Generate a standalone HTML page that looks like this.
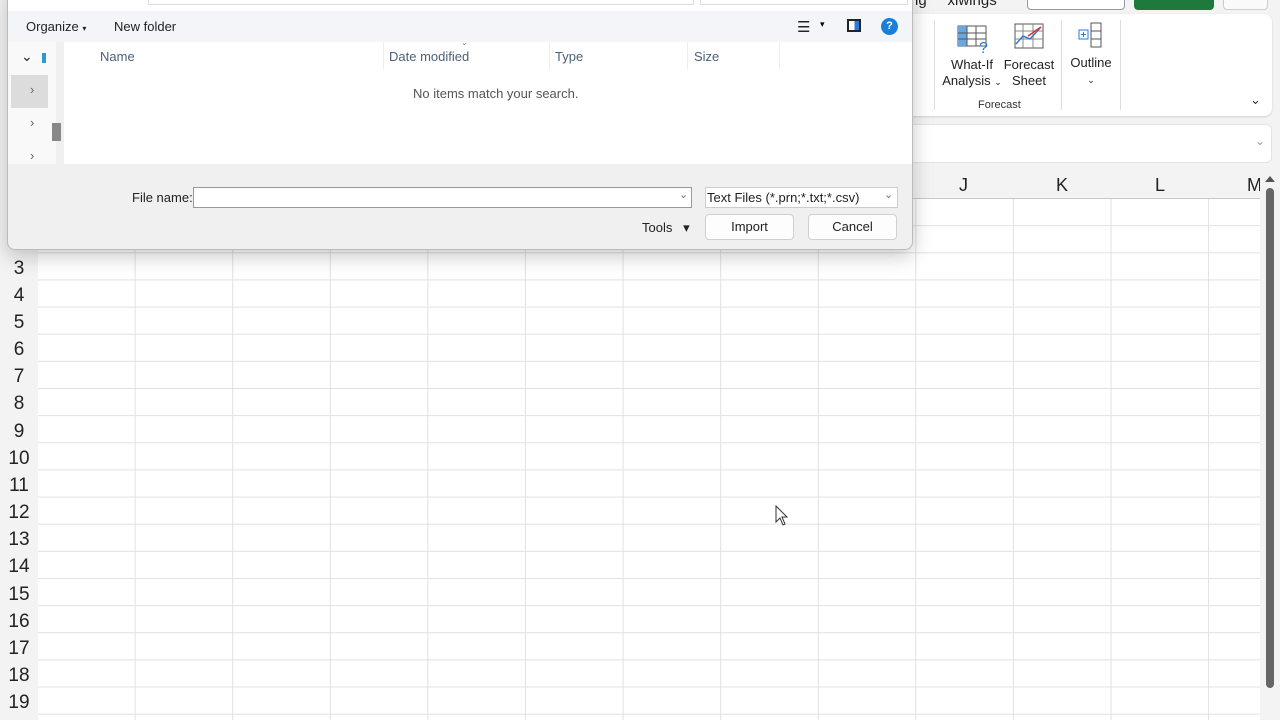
<!DOCTYPE html><html><head><style>
*{margin:0;padding:0;box-sizing:border-box}
body{width:1280px;height:720px;overflow:hidden;background:#f3f3f3;font-family:"Liberation Sans",sans-serif;position:relative}
.a{position:absolute}
.grid{left:38px;top:198px;width:1222px;height:522px;background-color:#fff;
background-image:linear-gradient(to right,#e1e1e1 1px,transparent 1px),linear-gradient(to bottom,#e1e1e1 1px,transparent 1px);
background-size:97.6px 27.15px;background-position:-1px 0px}
.rn{left:0;width:38px;text-align:center;font-size:19px;color:#222;height:27px;line-height:27px}
.ch{top:175px;font-size:18px;color:#222}
.t{font-size:13px;color:#222}
.btn{background:#fdfdfd;border:1px solid #d0d0d0;border-radius:4px;font-size:13px;text-align:center;line-height:24px;height:26px;color:#222}
</style></head><body>
<!-- ribbon -->
<div class="a" style="left:880px;top:0;width:400px;height:10px;background:#f3f3f3"></div>
<div class="a" style="left:1027px;top:-8px;width:98px;height:18px;border:1px solid #999;border-radius:4px;background:#fff"></div>
<div class="a" style="left:1134px;top:-8px;width:80px;height:18px;border-radius:4px;background:#1d7a3c"></div>
<div class="a" style="left:1223px;top:-8px;width:45px;height:18px;border:1px solid #ccc;border-radius:4px;background:#fafafa"></div>
<div class="a t" style="left:915px;top:-8px;font-size:15px">ig&nbsp;&nbsp;&nbsp;&nbsp;&nbsp;xlwings</div>
<div class="a" style="left:900px;top:14px;width:372px;height:102px;background:#fff;border-radius:8px;box-shadow:0 1px 2px rgba(0,0,0,.15)"></div>
<div class="a" style="left:934px;top:20px;width:1px;height:90px;background:#ddd"></div>
<div class="a" style="left:1061px;top:20px;width:1px;height:90px;background:#ddd"></div>
<div class="a" style="left:1120px;top:20px;width:1px;height:90px;background:#ddd"></div>
<svg class="a" style="left:957px;top:24px" width="34" height="30"><rect x="1" y="2" width="28" height="20" fill="none" stroke="#555"/><rect x="1" y="2" width="9" height="20" fill="#6aa6e0"/><path d="M1 9H29M1 15H29M10 2V22M19 2V22" stroke="#555"/><text x="22" y="29" font-size="16" fill="#2a7ad5">?</text></svg>
<svg class="a" style="left:1013px;top:22px" width="32" height="30"><rect x="2" y="2" width="28" height="24" fill="none" stroke="#555"/><path d="M2 9H30M2 17H30M10 2V26M20 2V26" stroke="#888"/><path d="M3 22L10 14L17 17L28 5" stroke="#2a7ad5" fill="none" stroke-width="1.5"/><path d="M15 14L28 5" stroke="#d33" stroke-width="1.5"/></svg>
<svg class="a" style="left:1077px;top:20px" width="28" height="30"><rect x="14" y="3" width="10" height="24" fill="none" stroke="#555"/><path d="M14 11H24M14 19H24" stroke="#555"/><rect x="2" y="10" width="9" height="9" fill="none" stroke="#2a7ad5"/><path d="M6.5 12V17M4 14.5H9" stroke="#2a7ad5"/></svg>
<div class="a t" style="left:936px;top:57px;width:72px;text-align:center;line-height:16px;white-space:nowrap">What-If<br>Analysis <span style="font-size:9px">&#8964;</span></div>
<div class="a t" style="left:1003px;top:57px;width:52px;text-align:center;line-height:16px">Forecast<br>Sheet</div>
<div class="a t" style="left:1066px;top:55px;width:50px;text-align:center;line-height:16px">Outline<br><span style="font-size:9px">&#8964;</span></div>
<div class="a" style="left:978px;top:99px;font-size:11px;color:#333">Forecast</div>
<div class="a" style="left:1250px;top:92px;font-size:13px;color:#333">&#8964;</div>
<div class="a" style="left:900px;top:124px;width:372px;height:39px;background:#fff;border-radius:6px;border:1px solid #e3e3e3"></div>
<div class="a" style="left:1255px;top:134px;font-size:12px;color:#999">&#8964;</div>
<!-- sheet -->
<div class="a grid"></div>
<div class="a" style="left:38px;top:198px;width:1222px;height:1px;background:#c8c8c8"></div>
<div class="a ch" style="left:959px">J</div><div class="a ch" style="left:1056px">K</div><div class="a ch" style="left:1155px">L</div><div class="a ch" style="left:1247px">M</div>
<div class="a" style="left:1260px;top:172px;width:20px;height:548px;background:#f3f3f3"></div>
<div class="a" style="left:1265px;top:176px;width:0;height:0;border-left:5px solid transparent;border-right:5px solid transparent;border-bottom:6px solid #555"></div>
<div class="a" style="left:1266px;top:188px;width:8px;height:500px;border-radius:4px;background:#666"></div>
<div class="a rn" style="top:255px">3</div><div class="a rn" style="top:282px">4</div><div class="a rn" style="top:309px">5</div><div class="a rn" style="top:336px">6</div><div class="a rn" style="top:363px">7</div><div class="a rn" style="top:390px">8</div><div class="a rn" style="top:418px">9</div><div class="a rn" style="top:445px">10</div><div class="a rn" style="top:472px">11</div><div class="a rn" style="top:499px">12</div><div class="a rn" style="top:526px">13</div><div class="a rn" style="top:553px">14</div><div class="a rn" style="top:581px">15</div><div class="a rn" style="top:608px">16</div><div class="a rn" style="top:635px">17</div><div class="a rn" style="top:662px">18</div><div class="a rn" style="top:689px">19</div>
<svg class="a" style="left:775px;top:505px" width="16" height="22"><path d="M1 1V17L5 13L8 20L10 19L7 12H12Z" fill="#fff" stroke="#333"/></svg>
<!-- dialog -->
<div class="a" style="left:7px;top:-10px;width:906px;height:260px;background:#f0f0f0;border:1px solid #bbb;border-radius:0 0 8px 8px;box-shadow:0 6px 20px rgba(0,0,0,.22);overflow:hidden">
 <div class="a" style="left:0;top:0;width:906px;height:20px;background:#fff"></div>
 <div class="a" style="left:140px;top:0;width:546px;height:14px;border:1px solid #ddd;background:#fff"></div>
 <div class="a" style="left:692px;top:0;width:208px;height:14px;border:1px solid #ddd;background:#fff"></div>
 <div class="a" style="left:0;top:20px;width:906px;height:31px;background:#f3f5f8"></div>
 <div class="a t" style="left:18px;top:28px">Organize <span style="font-size:8px">▾</span></div>
 <div class="a t" style="left:106px;top:28px">New folder</div>
 <div class="a" style="left:789px;top:27px;font-size:15px;color:#222">&#9776;</div>
 <div class="a" style="left:812px;top:28px;font-size:9px">▾</div>
 <div class="a" style="left:839px;top:28px;width:14px;height:13px;border:2px solid #222;background:linear-gradient(to right,#fff 55%,#2a7ad5 55%)"></div>
 <div class="a" style="left:873px;top:27px;width:17px;height:17px;border-radius:50%;background:#1a7fd8;color:#fff;font-size:11px;text-align:center;line-height:17px;font-weight:bold">?</div>
 <div class="a" style="left:0;top:51px;width:48px;height:122px;background:#f9f9f9"></div>
 <div class="a" style="left:3px;top:84px;width:37px;height:33px;background:#dcdcdc"></div>
 <div class="a t" style="left:13px;top:57px;font-size:14px">&#8964;</div>
 <div class="a" style="left:34px;top:62px;width:4px;height:10px;background:#2a9ad5"></div>
 <div class="a" style="left:22px;top:91px;color:#666;font-size:13px">›</div>
 <div class="a" style="left:22px;top:124px;color:#666;font-size:13px">›</div>
 <div class="a" style="left:22px;top:157px;color:#666;font-size:13px">›</div>
 <div class="a" style="left:44px;top:132px;width:9px;height:18px;background:#888"></div>
 <div class="a" style="left:56px;top:51px;width:850px;height:122px;background:#fff"></div>
 <div class="a" style="left:375px;top:51px;width:1px;height:27px;background:#eee"></div>
 <div class="a" style="left:541px;top:51px;width:1px;height:27px;background:#eee"></div>
 <div class="a" style="left:679px;top:51px;width:1px;height:27px;background:#eee"></div>
 <div class="a" style="left:771px;top:51px;width:1px;height:27px;background:#eee"></div>
 <div class="a t" style="left:92px;top:58px;color:#4c607a">Name</div>
 <div class="a t" style="left:381px;top:58px;color:#4c607a">Date modified</div>
 <div class="a" style="left:453px;top:47px;font-size:8px;color:#888">&#8964;</div>
 <div class="a t" style="left:547px;top:58px;color:#4c607a">Type</div>
 <div class="a t" style="left:686px;top:58px;color:#4c607a">Size</div>
 <div class="a t" style="left:405px;top:95px;color:#555">No items match your search.</div>
 <div class="a t" style="left:124px;top:199px">File name:</div>
 <div class="a" style="left:185px;top:196px;width:499px;height:21px;background:#fff;border:1px solid #999"></div>
 <div class="a" style="left:671px;top:197px;font-size:11px;color:#777">&#8964;</div>
 <div class="a" style="left:697px;top:196px;width:193px;height:21px;background:#fff;border:1px solid #ccc"></div>
 <div class="a t" style="left:699px;top:199px">Text Files (*.prn;*.txt;*.csv)</div>
 <div class="a" style="left:876px;top:197px;font-size:11px;color:#777">&#8964;</div>
 <div class="a t" style="left:634px;top:229px">Tools&nbsp;&nbsp;&nbsp;▾</div>
 <div class="a btn" style="left:697px;top:223px;width:89px">Import</div>
 <div class="a btn" style="left:800px;top:223px;width:89px">Cancel</div>
</div>
</body></html>
